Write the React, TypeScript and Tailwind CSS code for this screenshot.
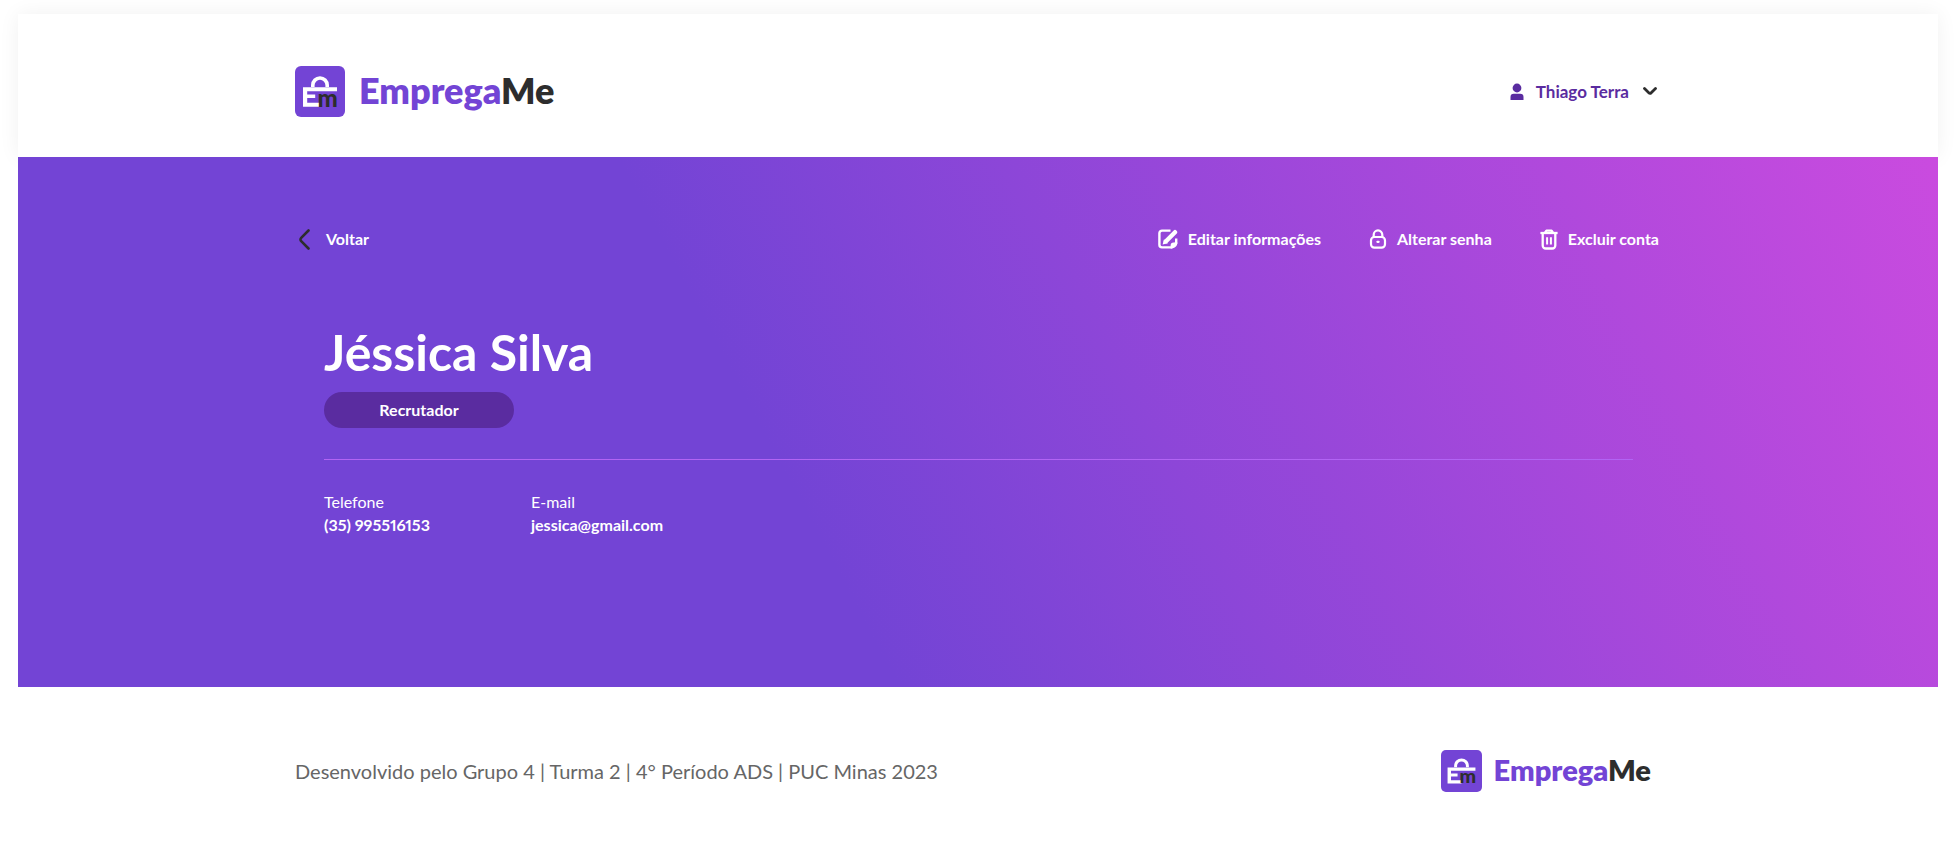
import { useId } from "react";

function Logo({ small = false }: { small?: boolean }) {
  return (
    <a
      href="#inicio"
      aria-label="EmpregaMe"
      className={small ? "flex items-center gap-3" : "flex items-center gap-3.5"}
    >
      <svg viewBox="0 0 50 51" aria-hidden="true" className={small ? "h-[42px] w-[41px]" : "h-[51px] w-[50px]"}>
        <rect width="50" height="51" rx="6" fill="#7344d5" />
        <path d="M17.8 21v-1.8a7.2 7.2 0 0 1 14.4 0V21" fill="none" stroke="#fff" strokeWidth="3.6" />
        <path d="M8 21.2h34v4H12.2v3.3h8v3.6h-8v4.6H25v4H8z" fill="#fff" />
        <text x="22.6" y="40.7" fontSize="24" fontWeight="900" fill="#2d2d2d" className="font-['Lato',sans-serif]">
          m
        </text>
      </svg>
      <span
        className={
          small
            ? "pb-0.5 text-[29px] leading-9 font-extrabold text-[#7344d5]"
            : "pb-1 text-4xl leading-11 font-extrabold text-[#7344d5]"
        }
      >
        Emprega<span className="text-[#2d2d2d]">Me</span>
      </span>
    </a>
  );
}

function PersonIcon() {
  return (
    <svg viewBox="0 0 14 18" aria-hidden="true" className="h-[18px] w-3.5" fill="currentColor">
      <circle cx="7" cy="5" r="4.4" />
      <path d="M0.5 17v-3a3.3 3.3 0 0 1 3.3-3.3h6.4a3.3 3.3 0 0 1 3.3 3.3v3z" />
    </svg>
  );
}

function EditIcon() {
  return (
    <svg viewBox="0 0 20 20" aria-hidden="true" className="size-5" fill="none" stroke="currentColor">
      <path d="M12.5 1.6H4A2.6 2.6 0 0 0 1.4 4.2v11.6A2.6 2.6 0 0 0 4 18.4h9.5l4.7-4.4V9.5" strokeWidth="2.4" />
      <path d="M8 12.2 17 3.2" strokeWidth="4.4" strokeLinecap="round" />
      <path d="M4.6 15.6l1.4-5.4 4 4z" fill="currentColor" stroke="none" />
      <path d="M12.6 19.4v-3a3 3 0 0 1 3-3h3.8c0 3.6-2.4 6-6.8 6z" fill="currentColor" stroke="none" />
    </svg>
  );
}

function LockIcon() {
  return (
    <svg viewBox="0 0 18 20" aria-hidden="true" className="h-5 w-[18px]" fill="none" stroke="currentColor" strokeWidth="2.2">
      <rect x="2" y="8" width="14" height="10.6" rx="3.4" />
      <path d="M4.7 8.4V5.7a4.3 4.3 0 0 1 8.6 0v2.7" />
      <path d="M8.4 12.8h1.2" strokeLinecap="round" />
    </svg>
  );
}

function TrashIcon() {
  return (
    <svg viewBox="0 0 18 21" aria-hidden="true" className="h-[21px] w-[18px]" fill="none" stroke="currentColor" strokeWidth="2.3">
      <path d="M0.4 4h17.2" />
      <path d="M5 3.6 6.4 1.6h5.2L13 3.6" strokeLinejoin="round" />
      <path d="M2.7 4.5v12a3 3 0 0 0 3 3h6.6a3 3 0 0 0 3-3v-12" />
      <path d="M7.1 8.2v7.4M10.9 8.2v7.4" strokeWidth="2" />
    </svg>
  );
}

function Field({ label, value }: { label: string; value: string }) {
  const id = useId();
  return (
    <div>
      <dt id={id}>{label}</dt>
      <dd aria-labelledby={id} className="font-bold proportional-nums">{value}</dd>
    </div>
  );
}

export default function App() {
  const action = "flex items-center gap-2.5";
  return (
    <div className="min-h-screen bg-white px-[18px] pt-3.5 font-['Lato',sans-serif] text-base">
      <header className="bg-white px-6 pt-[52px] pb-10 shadow-[0_0_20px_rgba(0,0,0,0.06)]">
        <div className="mx-auto flex max-w-[1366px] items-center justify-between">
          <Logo />
          <button type="button" className="flex items-center gap-3 pr-1 text-[17px] font-bold text-[#5a2ca0]">
            <PersonIcon />
            Thiago Terra
            <svg viewBox="0 0 14 9" aria-hidden="true" className="ml-0.5 h-[9px] w-3.5" fill="none" stroke="#2d2d2d" strokeWidth="2.8" strokeLinecap="round" strokeLinejoin="round">
              <path d="M1.5 1.5 6 6a1.4 1.4 0 0 0 2 0l4.5-4.5" />
            </svg>
          </button>
        </div>
      </header>

      <main className="relative bg-linear-[62deg,#7344d5_40%,#ca4bdf] px-6 pt-[70px] pb-[151px] text-white">
        <div className="mx-auto max-w-[1366px]">
          <nav className="flex items-center justify-between font-bold">
            <a href="#voltar" className="flex items-center gap-4 pl-1">
              <svg viewBox="0 0 11 21" aria-hidden="true" className="h-[21px] w-[11px]" fill="none" stroke="#2d2d2d" strokeWidth="2.6" strokeLinecap="round" strokeLinejoin="round">
                <path d="M9.5 1.5 2.2 8.8a2.4 2.4 0 0 0 0 3.4L9.5 19.5" />
              </svg>
              Voltar
            </a>
            <div className="flex gap-12 pr-0.5">
              <button type="button" className={action}><EditIcon />Editar informações</button>
              <button type="button" className={action}><LockIcon />Alterar senha</button>
              <button type="button" className={action}><TrashIcon />Excluir conta</button>
            </div>
          </nav>

          <section className="pt-[71px] pr-7 pl-[29px]">
            <h1 className="text-[50px] leading-[60px] font-bold">Jéssica Silva</h1>
            <p className="mt-2.5 flex h-9 w-[190px] items-center justify-center rounded-full bg-[#5a2ca0] font-bold">
              Recrutador
            </p>
            <hr className="mt-[31px] border-[#b264f4]" />
            <dl className="mt-[30px] grid grid-cols-[207px_1fr] leading-[23px]">
              <Field label="Telefone" value="(35) 995516153" />
              <Field label="E-mail" value="jessica@gmail.com" />
            </dl>
          </section>
        </div>
      </main>

      <footer className="px-6 pt-[63px] pb-16">
        <div className="mx-auto flex max-w-[1366px] items-center justify-between pr-2.5">
          <p className="text-xl text-[#666666]">
            Desenvolvido pelo Grupo 4 | Turma 2 | 4° Período ADS | PUC Minas 2023
          </p>
          <Logo small />
        </div>
      </footer>
    </div>
  );
}
